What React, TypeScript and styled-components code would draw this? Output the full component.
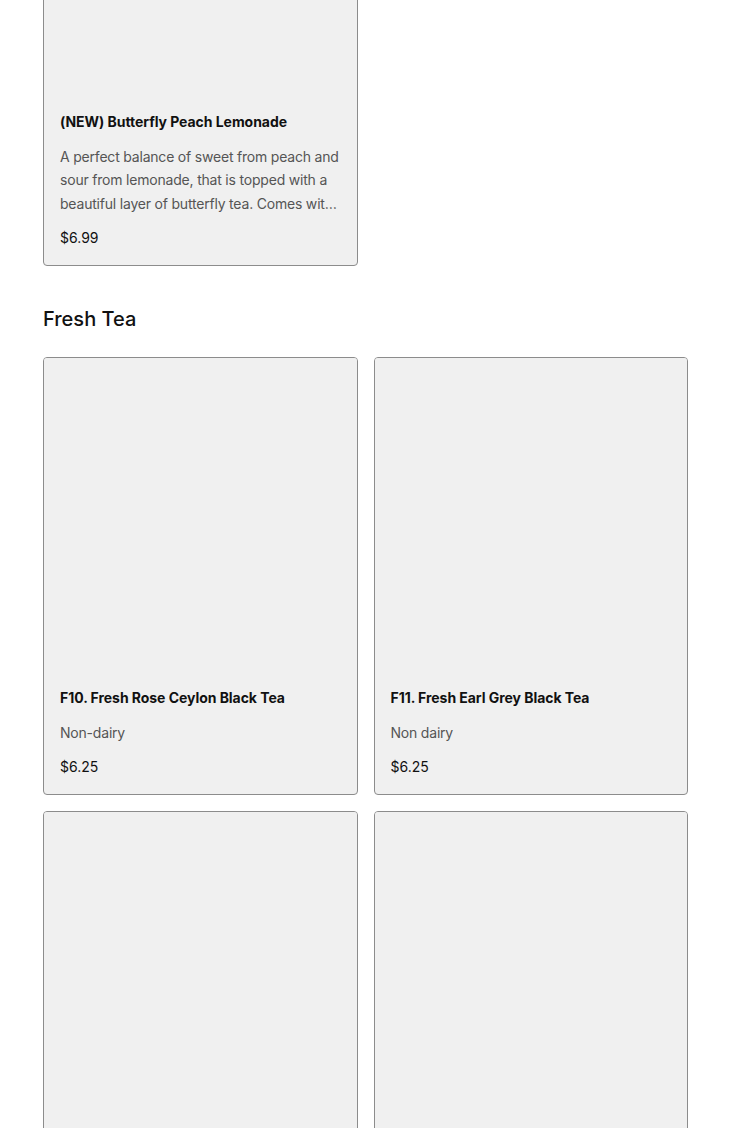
import React from "react";
import styled, { createGlobalStyle } from "styled-components";

const GlobalStyle = createGlobalStyle`
  html, body { margin: 0; padding: 0; background: #ffffff; }
  body { font-family: Inter, "Noto Sans", Arial, sans-serif; color: #111; -webkit-font-smoothing: antialiased; }
  * { box-sizing: border-box; }
`;

const Page = styled.main`
  padding: 0 42px 40px 43px;
  margin-top: -219px;
`;

const Section = styled.section`
  display: flex;
  flex-direction: column;
`;

const SectionTitle = styled.h2`
  margin: 39px 0 24px;
  font-size: 20px;
  line-height: 28px;
  font-weight: 500;
  color: #111;
`;

const Grid = styled.div`
  display: grid;
  grid-template-columns: 1fr 1fr;
  gap: 16px;
`;

const Card = styled.article`
  background: #f0f0f0;
  border: 1px solid #8c8c8c;
  border-radius: 4px;
  overflow: hidden;
  display: flex;
  flex-direction: column;
`;

const Thumb = styled.div`
  aspect-ratio: 1 / 1;
  width: 100%;
  background: #f0f0f0;
`;

const Body = styled.div`
  padding: 17px 16px 17px;
  display: flex;
  flex-direction: column;
`;

const Name = styled.h3`
  margin: 0 0 13px;
  font-size: 14px;
  line-height: 20px;
  font-weight: 700;
  letter-spacing: -0.05px;
  color: #111;
`;

const Desc = styled.p`
  margin: 0 0 13px;
  font-size: 14px;
  line-height: 23.5px;
  letter-spacing: -0.2px;
  color: #555;
  display: -webkit-box;
  -webkit-line-clamp: 3;
  -webkit-box-orient: vertical;
  overflow: hidden;
`;

const Price = styled.span`
  font-size: 14px;
  line-height: 20px;
  color: #111;
`;

type Item = { name: string; desc?: string; price?: string };

const ItemCard = ({ item }: { item: Item }) => (
  <Card>
    <Thumb />
    <Body>
      <Name>{item.name}</Name>
      {item.desc && <Desc>{item.desc}</Desc>}
      {item.price && <Price>{item.price}</Price>}
    </Body>
  </Card>
);

const lemonade: Item[] = [
  {
    name: "(NEW) Butterfly Peach Lemonade",
    desc: "A perfect balance of sweet from peach and sour from lemonade, that is topped with a beautiful layer of butterfly tea. Comes with a refreshing finish.",
    price: "$6.99",
  },
];

const freshTea: Item[] = [
  { name: "F10. Fresh Rose Ceylon Black Tea", desc: "Non-dairy", price: "$6.25" },
  { name: "F11. Fresh Earl Grey Black Tea", desc: "Non dairy", price: "$6.25" },
  { name: "F12. Fresh Jasmine Green Tea", desc: "Non-dairy", price: "$6.25" },
  { name: "F13. Fresh Oolong Tea", desc: "Non-dairy", price: "$6.25" },
];

export default function App() {
  return (
    <>
      <GlobalStyle />
      <Page>
        <Section>
          <Grid>
            {lemonade.map((it) => (
              <ItemCard key={it.name} item={it} />
            ))}
          </Grid>
        </Section>
        <Section>
          <SectionTitle>Fresh Tea</SectionTitle>
          <Grid>
            {freshTea.map((it) => (
              <ItemCard key={it.name} item={it} />
            ))}
          </Grid>
        </Section>
      </Page>
    </>
  );
}
